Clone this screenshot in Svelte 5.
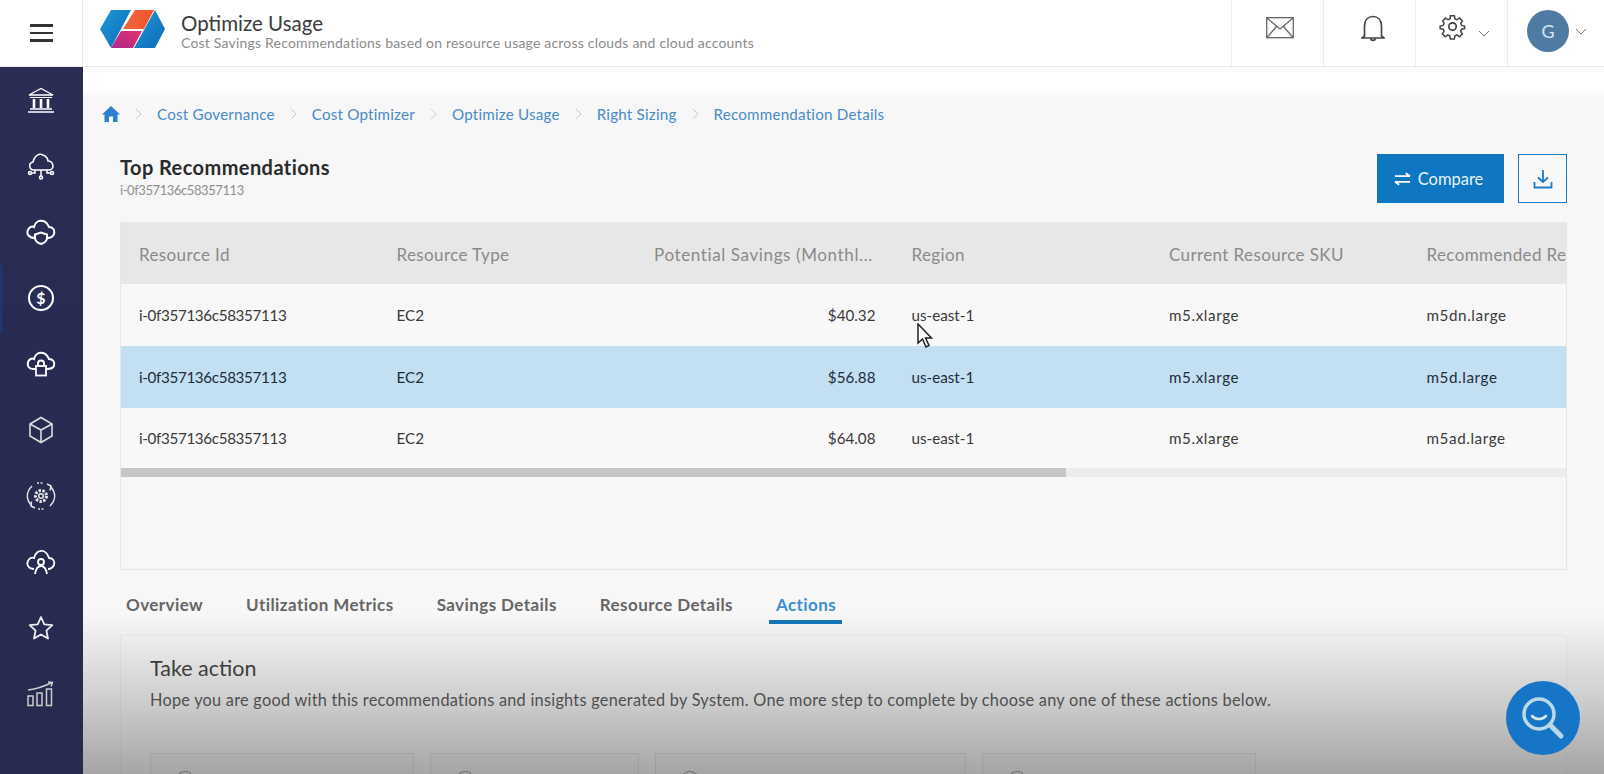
<script>
  const crumbs = ['Cost Governance', 'Cost Optimizer', 'Optimize Usage', 'Right Sizing', 'Recommendation Details'];
  const rows = [
    { sav: '$40.32', sku: 'm5dn.large', sel: false },
    { sav: '$56.88', sku: 'm5d.large', sel: true },
    { sav: '$64.08', sku: 'm5ad.large', sel: false }
  ];
  const tabs = ['Overview', 'Utilization Metrics', 'Savings Details', 'Resource Details', 'Actions'];
  const boxes = [264, 209, 311, 274];
</script>

<div class="app">
  <header class="top">
    <button class="burger" aria-label="Menu"><span></span><span></span><span></span></button>
    <div class="brand">
      <svg class="logo" viewBox="0 0 66 38" width="66" height="38">
        <defs>
          <linearGradient id="bl" x1="0" y1="0" x2="1" y2="1"><stop offset="0" stop-color="#1b9ad6"/><stop offset="1" stop-color="#1168b8"/></linearGradient>
          <linearGradient id="or" x1="0" y1="0" x2="1" y2="0"><stop offset="0" stop-color="#f0653a"/><stop offset="1" stop-color="#f2542d"/></linearGradient>
          <linearGradient id="pk" x1="0" y1="1" x2="1" y2="0"><stop offset="0" stop-color="#a92a8c"/><stop offset="1" stop-color="#e62f6c"/></linearGradient>
        </defs>
        <path d="M0 19 L11 0 H31 L11 38 Z" fill="url(#bl)"/>
        <path d="M35 0 H54 L44 19 H23 Z" fill="url(#or)"/>
        <path d="M21 21 H42 L33 38 H11 Z" fill="url(#pk)"/>
        <path d="M55 0 L65 19 L55 38 H34 Z" fill="url(#bl)"/>
      </svg>
      <div class="heading">
        <div class="h1">Optimize Usage</div>
        <div class="h2">Cost Savings Recommendations based on resource usage across clouds and cloud accounts</div>
      </div>
    </div>
    <div class="tools">
      <div class="tool mail">
        <svg viewBox="0 0 28 22" width="28" height="22" fill="none" stroke="#666" stroke-width="1.3"><rect x="0.7" y="0.7" width="26.6" height="20"/><path d="M1 1 L14 12 L27 1 M1 20.500 L10.500 9.500 M27 20.500 L17.500 9.500"/></svg>
      </div>
      <div class="tool bell">
        <svg viewBox="0 0 24 28" width="24" height="28" fill="none" stroke="#444" stroke-width="1.700"><path d="M3.500 22 V12 C3.500 6 7 2.500 12 2.500 S20.500 6 20.500 12 V22 L23 24 H1 Z"/><path d="M9.500 24.500 A2.600 2.600 0 0 0 14.500 24.500"/></svg>
      </div>
      <div class="tool gear">
        <svg class="cog" viewBox="0 0 24 24" width="27" height="27" fill="none" stroke="#444" stroke-width="1.500"><circle cx="12" cy="12" r="3.300"/><path d="M10 1.500h4l.6 3 2 .9 2.600-1.700 2.800 2.800-1.700 2.600.9 2 3 .6v2.600l-3 .6-.9 2 1.700 2.600-2.800 2.800-2.600-1.700-2 .9-.6 3h-4l-.6-3-2-.9-2.600 1.700-2.800-2.800 1.700-2.600-.9-2-3-.6v-2.600l3-.6.9-2L2.400 6.500l2.800-2.800 2.600 1.700 2-.9z" transform="translate(1.200 1.200) scale(.89)"/></svg>
        <svg class="chev" viewBox="0 0 12 7" width="12" height="7" fill="none" stroke="#777" stroke-width="1"><path d="M1 1 L6 6 L11 1"/></svg>
      </div>
      <div class="tool user">
        <div class="avatar">G</div>
        <svg viewBox="0 0 12 7" width="12" height="7" fill="none" stroke="#777" stroke-width="1"><path d="M1 1 L6 6 L11 1"/></svg>
      </div>
    </div>
  </header>

  <div class="body">
    <nav class="side">
      <div class="item"><svg viewBox="0 0 28 26" width="28" height="26" fill="none" stroke="#fff" stroke-width="1.300"><path d="M2 8 L14 1.500 L26 8 Z"/><path d="M3 10.500 H25" stroke-width="1"/><path d="M7 12 V21 M14 12 V21 M21 12 V21" stroke-width="2.600"/><path d="M3 22 H25 M1 25 H27"/></svg></div>
      <div class="item"><svg viewBox="0 0 28 28" width="28" height="28" fill="none" stroke="#fff" stroke-width="1.500"><path d="M7 18 C2 18 1 11 6 10 C7 4 12 1 16 3 C20 4 21 8 21 9 C26 9 28 16 23 18 Z"/><path d="M14 18 V24 M8 18 V21 H4 M20 18 V21 H24"/><circle cx="14" cy="25.500" r="1.500"/><circle cx="3" cy="21" r="1.500"/><circle cx="25" cy="21" r="1.500"/></svg></div>
      <div class="item"><svg viewBox="0 0 30 26" width="30" height="26" fill="none" stroke="#fff" stroke-width="2"><path d="M9 19 C3 19 0 15 2 11 C3 8 6 7 8 8 C9 3 13 1 17 2 C21 3 22 6 23 8 C27 8 29 11 28 15 C27 18 25 19 21 19"/><path d="M9 15.500 L15 13.500 L21 15.500 V19 C21 22 18 24 15 25 C12 24 9 22 9 19 Z"/></svg></div>
      <div class="item active"><svg viewBox="0 0 28 28" width="28" height="28" fill="none" stroke="#fff" stroke-width="2"><circle cx="14" cy="14" r="12"/><text x="14" y="19.500" text-anchor="middle" class="dollar">$</text></svg></div>
      <div class="item"><svg viewBox="0 0 30 28" width="30" height="28" fill="none" stroke="#fff" stroke-width="2"><path d="M10 19 H7 C3 19 1 16 2 12 C3 9 6 8 8 9 C9 4 13 2 17 3 C21 4 22 7 23 9 C27 9 29 12 28 16 C27 18 25 19 21 19 H20"/><rect x="10" y="16" width="10" height="9.500" stroke-width="1.800"/><path d="M12 16 V13.500 A3 3 0 0 1 18 13.500 V16"/></svg></div>
      <div class="item"><svg viewBox="0 0 26 28" width="26" height="28" fill="none" stroke="#ddd" stroke-width="1.600"><path d="M13 1.500 L24 8 V20 L13 26.500 L2 20 V8 Z"/><path d="M2 8 L13 14 L24 8 M13 14 V26.500"/></svg></div>
      <div class="item"><svg viewBox="0 0 30 30" width="30" height="30" fill="none" stroke="#e4e4e4" stroke-width="1.500"><path d="M5 24 C0 18 0 11 6 5 M25 6 C30 12 30 19 24 25"/><path d="M21 3 L25 5 L24 9.500 M9 27 L5 25 L5.500 20.500"/><path d="M11 2 H18 M12 28 H19" stroke-dasharray="2 1.500"/><circle cx="15" cy="15" r="2.300"/><circle cx="15" cy="15" r="5.500" stroke-width="3" stroke-dasharray="2.400 1.400"/></svg></div>
      <div class="item"><svg viewBox="0 0 30 26" width="30" height="26" fill="none" stroke="#fff" stroke-width="1.800"><path d="M8 20 C3 20 0 16 2 12 C3 9 6 8 8 9 C9 4 13 1 17 2 C21 3 22 6 23 9 C27 9 29 12 28 16 C27 18 25 20 22 20"/><circle cx="15" cy="13" r="3"/><path d="M9 25 C10 19 12 17 15 17 C18 17 20 19 21 25"/></svg></div>
      <div class="item"><svg viewBox="0 0 26 26" width="26" height="26" fill="none" stroke="#eee" stroke-width="1.800" stroke-linejoin="round"><path d="M13 2 L16.300 9.300 L24.300 10.200 L18.400 15.600 L20 23.500 L13 19.500 L6 23.500 L7.600 15.600 L1.700 10.200 L9.700 9.300 Z"/></svg></div>
      <div class="item"><svg viewBox="0 0 28 26" width="28" height="26" fill="none" stroke="#ccc" stroke-width="1.500"><rect x="1" y="15" width="5" height="9.500"/><rect x="10" y="12" width="5" height="12.500"/><rect x="19.500" y="8" width="5" height="16.500"/><path d="M1 9 C9 8 16 6 25 1.500 M21 1 L25.500 1.500 L24 5.500"/></svg></div>
    </nav>

    <main class="main">
      <div class="band"></div>
      <div class="crumbs">
        <svg class="home" viewBox="0 0 18 16" width="18" height="16"><path d="M9 0 L18 8.500 H15.500 V16 H11 V10.500 H7 V16 H2.500 V8.500 H0 Z" fill="#2f7fd0"/></svg>
        {#each crumbs as c}
          <svg class="sep" viewBox="0 0 7 12" width="7" height="12" fill="none" stroke="#ccc" stroke-width="1"><path d="M1 1 L6 6 L1 11"/></svg>
          <span class="crumb">{c}</span>
        {/each}
      </div>

      <div class="titlebar">
        <div>
          <div class="title">Top Recommendations</div>
          <div class="sub">i-0f357136c58357113</div>
        </div>
        <div class="actions">
          <button class="compare">
            <svg viewBox="0 0 18 14" width="17" height="14" fill="none" stroke="#fff" stroke-width="1.900"><path d="M1 4 H17 M12.500 .8 L17 4 M17 10 H1 M5.500 13.200 L1 10"/></svg>
            Compare
          </button>
          <button class="dl" aria-label="Download">
            <svg viewBox="0 0 20 20" width="20" height="20" fill="none" stroke="#1a7cc4" stroke-width="1.800"><path d="M10 1 V13 M5 8.500 L10 13 L15 8.500 M1.500 13 V18.500 H18.500 V13"/></svg>
          </button>
        </div>
      </div>

      <section class="table">
        <div class="thead grid">
          <div>Resource Id</div>
          <div>Resource Type</div>
          <div class="pot">Potential Savings (Monthl...</div>
          <div>Region</div>
          <div>Current Resource SKU</div>
          <div class="clip">Recommended Resource</div>
        </div>
        {#each rows as r}
          <div class="row grid" class:sel={r.sel}>
            <div class="rid">i-0f357136c58357113</div>
            <div>EC2</div>
            <div class="num">{r.sav}</div>
            <div>us-east-1</div>
            <div class="sku">m5.xlarge</div>
            <div class="sku">{r.sku}</div>
          </div>
        {/each}
        <div class="scroll"><div class="thumb"></div></div>
      </section>

      <div class="tabs">
        {#each tabs as t, i}
          <div class="tab" class:on={i === 4}>{t}</div>
        {/each}
      </div>

      <section class="card">
        <h3>Take action</h3>
        <p>Hope you are good with this recommendations and insights generated by System. One more step to complete by choose any one of these actions below.</p>
        <div class="boxes">
          {#each boxes as w}
            <div class="box" style="width:{w}px"><span class="radio"></span></div>
          {/each}
        </div>
      </section>

      <div class="fade"></div>
    </main>
  </div>

  <svg class="cursor" viewBox="0 0 16 25" width="16" height="25"><path d="M1 1 V20 L5.500 16 L9 24 L12 22.500 L8.500 15 H14.500 Z" fill="#fff" stroke="#222" stroke-width="1.500"/></svg>

  <div class="fab">
    <svg viewBox="0 0 48 48" width="48" height="48" fill="none"><circle cx="20" cy="20" r="15" stroke="#bcd7e6" stroke-width="3.500"/><path d="M31 31 L42 42" stroke="#bcd7e6" stroke-width="5" stroke-linecap="round"/><path d="M13 22 C17 26 23 26 27 22" stroke="#d8e8f0" stroke-width="2.500" stroke-linecap="round"/></svg>
  </div>
</div>

<style>
  :global(body) { margin: 0; font-family: "Lato", "Liberation Sans", sans-serif; }
  .app { width: 1604px; height: 774px; overflow: hidden; position: relative; background: #f7f7f7; display: flex; flex-direction: column; }
  button { font-family: inherit; cursor: pointer; }

  .top { height: 67px; flex: none; display: flex; background: #fff; border-bottom: 1px solid #e9e9e9; box-sizing: border-box; }
  .burger { width: 83px; flex: none; border: 0; border-right: 1px solid #e6e6e6; background: #fff; display: flex; flex-direction: column; align-items: center; justify-content: center; gap: 5px; padding: 0; }
  .burger span { width: 23px; height: 2.500px; background: #333; }
  .brand { flex: 1; display: flex; align-items: center; padding-left: 17px; gap: 15px; }
  .logo { margin-top: -8px; }
  .heading { margin-top: -4px; }
  .h1 { font-size: 20.500px; color: #3b3b3b; line-height: 24px; }
  .h2 { font-size: 14px; color: #8b8b8b; line-height: 16px; letter-spacing: .2px; }
  .tools { display: flex; }
  .tool { width: 92px; box-sizing: border-box; border-left: 1px solid #ececec; display: flex; align-items: center; justify-content: center; padding-bottom: 10px; }
  .mail { padding-left: 4px; }
  .bell { padding-left: 6px; }
  .gear { gap: 12px; padding-left: 6px; }
  .gear .cog { margin-bottom: 4px; }
  .gear .chev { margin-top: 10px; }
  .user { gap: 6px; width: 97px; justify-content: flex-start; padding: 0 0 4px 19px; }
  .avatar { width: 42px; height: 42px; border-radius: 50%; background: #4f7ba3; color: #d6e6f3; display: flex; align-items: center; justify-content: center; font-size: 18px; }

  .body { flex: 1; display: flex; min-height: 0; }
  .side { width: 83px; flex: none; padding-right: 1px; box-sizing: border-box; background: linear-gradient(#2a2d54, #262a4e); display: flex; flex-direction: column; }
  .item { height: 66px; flex: none; display: flex; align-items: center; justify-content: center; box-sizing: border-box; }
  .item.active { box-shadow: inset 2px 0 0 #173a7d; }
  .dollar { font: 700 16px "Lato", sans-serif; fill: #fff; stroke: none; }

  .main { flex: 1; min-width: 0; position: relative; padding: 0 37px; background: #f7f7f7; }
  .band { position: absolute; left: 0; right: 0; top: 0; height: 30px; background: linear-gradient(#fff 70%, #f7f7f7); }
  .crumbs { position: relative; display: flex; align-items: center; height: 20px; margin: 37px 0 0 -18px; font-size: 15.200px; color: #4a8bc9; }
  .home { margin-right: 15px; }
  .sep { margin-right: 15px; }
  .crumb { margin-right: 15px; letter-spacing: .2px; }

  .titlebar { display: flex; justify-content: space-between; margin-top: 30px; height: 68px; }
  .title { font-size: 20px; font-weight: 700; color: #2b2b2b; line-height: 26px; letter-spacing: .42px; }
  .sub { font-size: 13px; color: #8f8f8f; line-height: 16px; margin-top: 2px; letter-spacing: -.42px; }
  .actions { display: flex; gap: 14px; height: 49px; }
  .compare { width: 127px; border: 0; background: #0f76c1; color: #e6f3fb; font-size: 16.500px; display: flex; align-items: center; justify-content: center; gap: 7px; padding: 0 4px 0 0; }
  .dl { width: 49px; background: #f8f8f8; border: 1.500px solid #1a7cc4; display: flex; align-items: center; justify-content: center; padding: 0; }

  .table { height: 348px; box-sizing: border-box; border: 1px solid #e6e6e6; border-top: 0; background: #f7f7f7; overflow: hidden; }
  .grid { display: grid; grid-template-columns: repeat(6, 257.500px); }
  .grid > div { padding: 0 18px; white-space: nowrap; overflow: hidden; box-sizing: border-box; }
  .thead { height: 62px; align-items: center; background: #e7e7e7; color: #8a8a8a; font-size: 17px; letter-spacing: .38px; padding-top: 3px; box-sizing: border-box; }
  .thead .clip { padding-right: 0; }
  .thead .pot { letter-spacing: .62px; padding-right: 0; }
  .row { height: 62px; padding-bottom: 1px; box-sizing: border-box; align-items: center; background: #f8f8f8; color: #3a3a3a; font-size: 15.200px; }
  .row:nth-child(4) { height: 60px; }
  .row.sel { background: #c3dff2; color: #1d2c3a; }
  .rid { letter-spacing: -.35px; }
  .sku { letter-spacing: .6px; }
  .num { text-align: right; padding-right: 18px !important; }
  .scroll { height: 9px; background: #ececec; }
  .thumb { width: 945px; height: 100%; background: #c6c6c6; }

  .tabs { display: flex; gap: 43px; height: 66px; box-sizing: border-box; padding: 22px 0 0 6px; }
  .tab { position: relative; font-size: 17px; font-weight: 700; color: #666; letter-spacing: .42px; height: 28px; line-height: 26px; }
  .tab.on { color: #3d8fd0; }
  .tab.on::after { content: ""; position: absolute; left: -7px; right: -6px; bottom: -4px; height: 4px; background: #1173b9; }

  .card { height: 140px; box-sizing: border-box; margin-top: -1px; background: #f8f8f8; border: 1px solid #eee; padding: 19px 29px; overflow: hidden; }
  .card h3 { margin: 0; font-size: 21.500px; font-weight: 400; color: #2d2d2d; line-height: 26px; }
  .card p { margin: 9px 0 0; font-size: 16.300px; color: #3a3a3a; line-height: 20px; letter-spacing: .26px; white-space: nowrap; }
  .boxes { display: flex; gap: 16px; margin-top: 43px; }
  .box { height: 60px; box-sizing: border-box; border: 1px solid #d8d8d8; background: #f4f4f4; padding: 17px 24px; flex: none; }
  .radio { display: block; width: 18px; height: 18px; border: 1.500px solid #555; border-radius: 50%; }

  .fade { position: absolute; left: 0; right: 0; bottom: 0; height: 160px; pointer-events: none; background: linear-gradient(rgba(119,119,119,0), rgba(119,119,119,.3) 50%, rgba(119,119,119,.64)); }

  .fab { position: absolute; left: 1506px; top: 681px; width: 74px; height: 74px; border-radius: 50%; background: #1675c7; display: flex; align-items: center; justify-content: center; }
  .cursor { position: absolute; left: 917px; top: 323px; }
</style>
